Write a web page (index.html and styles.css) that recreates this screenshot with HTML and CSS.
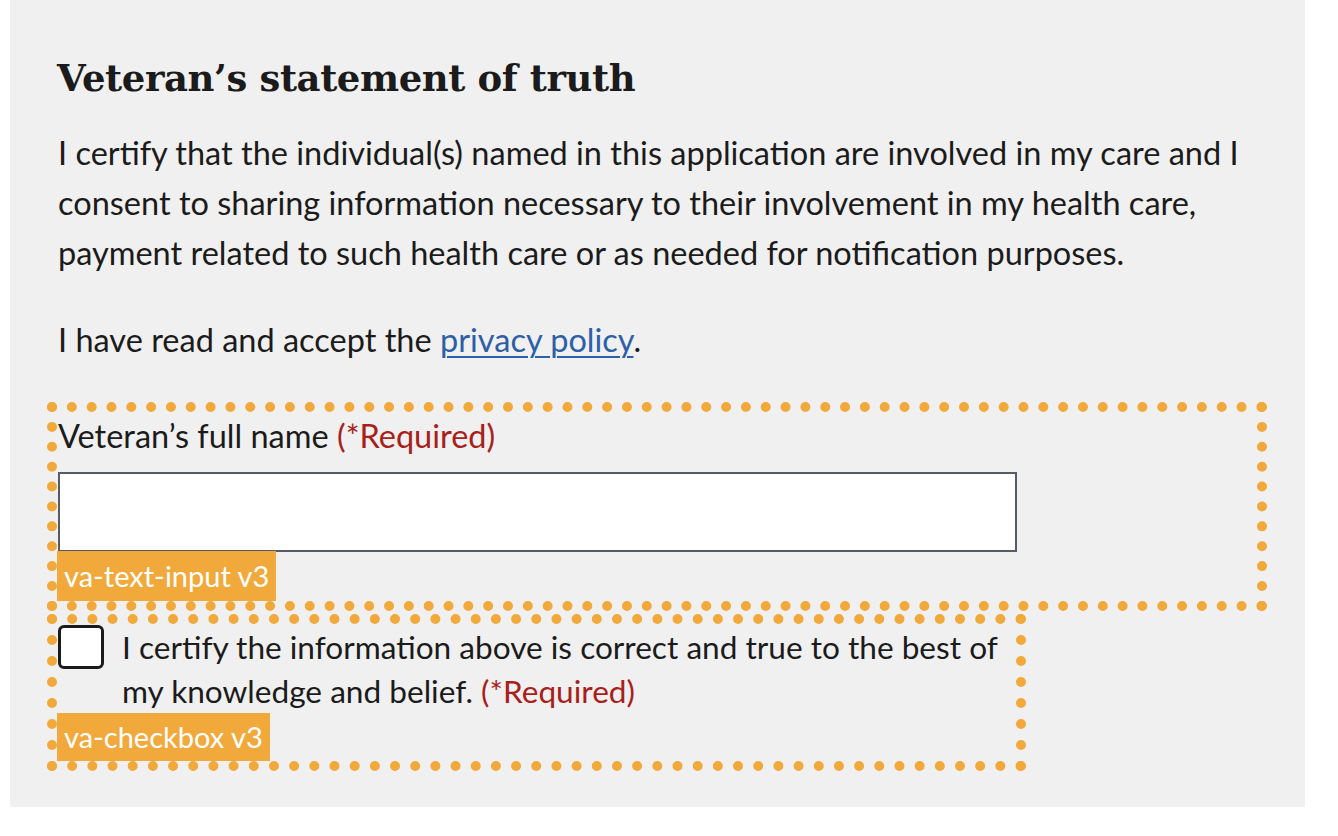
FILE: index.html
```html
<!DOCTYPE html>
<html lang="en">
<head>
<meta charset="utf-8">
<title>Veteran's statement of truth</title>
<link rel="stylesheet" href="styles.css">
</head>
<body>
<section class="card">
  <h2 class="card-title">Veteran’s statement of truth</h2>
  <p class="card-text">I certify that the individual(s) named in this application are involved in my care and I consent to sharing information necessary to their involvement in my health care, payment related to such health care or as needed for notification purposes.</p>
  <p class="card-text card-text--privacy">I have read and accept the <a class="link" href="#">privacy policy</a>.</p>

  <div class="component component--input">
    <label class="field-label" for="full-name">Veteran’s full name <span class="required">(*Required)</span></label>
    <input class="text-input" id="full-name" type="text">
    <span class="component-tag">va-text-input v3</span>
  </div>

  <div class="component component--checkbox">
    <div class="checkbox-row">
      <span class="checkbox-box"></span>
      <span class="checkbox-label">I certify the information above is correct and true to the best of my knowledge and belief. <span class="required">(*Required)</span></span>
    </div>
    <span class="component-tag component-tag--short">va-checkbox v3</span>
  </div>
</section>
</body>
</html>
```

FILE: styles.css
```css
html, body {
  margin: 0;
  padding: 0;
  background: #ffffff;
}

body {
  font-family: "Lato", "Liberation Sans", sans-serif;
  color: #1b1b1b;
  width: 1338px;
  height: 836px;
  overflow: hidden;
}

.card {
  margin-left: 10px;
  width: 1295px;
  height: 807px;
  box-sizing: border-box;
  background: #f0f0f0;
  padding: 50px 48px 0 47px;
}

.card-title {
  margin: 0;
  font-family: "DejaVu Serif", serif;
  font-weight: bold;
  font-size: 37px;
  line-height: 56px;
  letter-spacing: -0.4px;
  color: #1b1b1b;
}

.card-text {
  margin: 22px 0 0 0;
  font-size: 32.5px;
  line-height: 50px;
  padding-left: 1px;
}

.card-text--privacy {
  margin-top: 37px;
}

.link {
  color: #2d5fa6;
  text-decoration: underline;
  text-decoration-thickness: 2px;
  text-underline-offset: 4px;
}

.required {
  color: #a8201a;
}

.component {
  outline: 10px dotted #f2a93b;
  display: flex;
  flex-direction: column;
  align-items: flex-start;
}

.component--input {
  margin-top: 47px;
  width: 1200px;
  padding-top: 6px;
}

.field-label {
  font-size: 32.5px;
  line-height: 36px;
  padding-left: 1px;
}

.text-input {
  margin: 18px 0 0 1px;
  width: 959px;
  height: 80px;
  box-sizing: border-box;
  border: 2px solid #565c65;
  background: #ffffff;
  padding: 0;
}

.component-tag {
  background: #f2a93b;
  color: #ffffff;
  font-size: 29px;
  line-height: 50px;
  padding: 0 7px;
  white-space: nowrap;
}

.component-tag--short {
  line-height: 48px;
}

.component--input .component-tag {
  margin-top: -1px;
}

.component--checkbox {
  margin-top: 23px;
  width: 959px;
}

.checkbox-row {
  display: flex;
  gap: 18px;
  padding-left: 1px;
  padding-top: 1px;
}

.checkbox-box {
  flex: none;
  width: 46px;
  height: 44px;
  box-sizing: border-box;
  border: 3px solid #1b1b1b;
  border-radius: 6px;
  background: #ffffff;
}

.checkbox-label {
  font-size: 31.6px;
  line-height: 44px;
}
```
